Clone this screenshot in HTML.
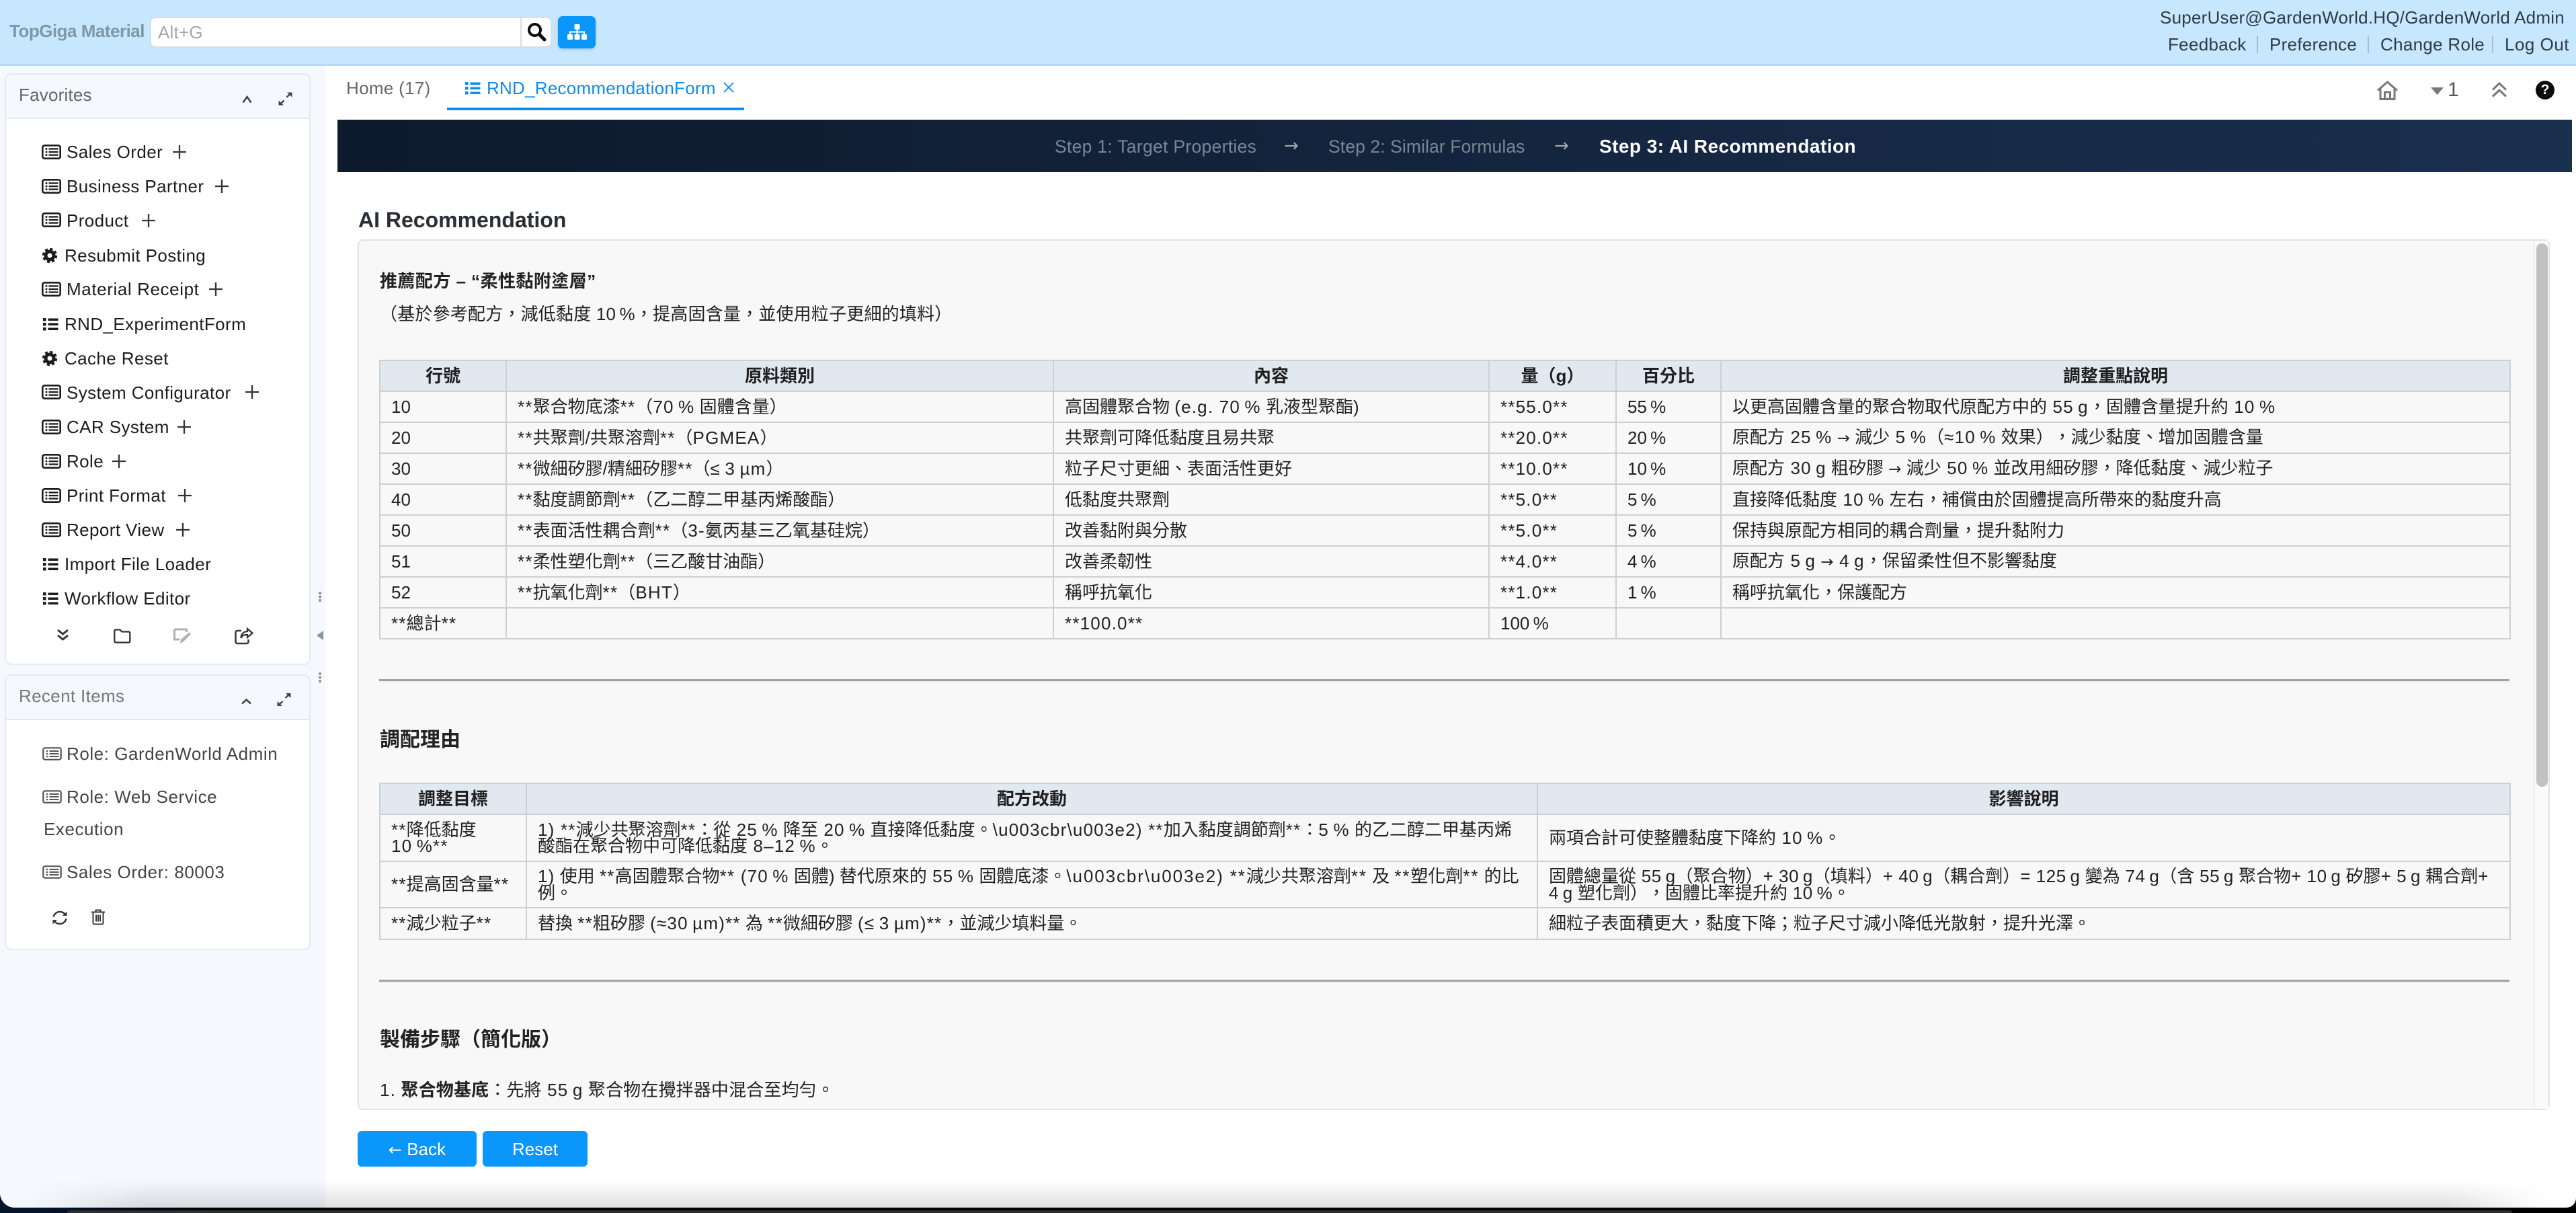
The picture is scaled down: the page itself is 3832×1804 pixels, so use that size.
<!DOCTYPE html>
<html lang="zh-Hant"><head><meta charset="utf-8"><title>RND_RecommendationForm</title>
<style>
*{box-sizing:border-box}
html,body{margin:0;padding:0;width:3832px;height:1804px;overflow:hidden;background:#000}
body{font-family:"Liberation Sans","Noto Sans CJK TC",sans-serif;font-size:26px;color:#222;position:relative;text-spacing-trim:space-all;font-feature-settings:"chws" 0}
.a{position:absolute}
.t{position:absolute;white-space:nowrap;line-height:32px;transform:translateY(-16px)}
svg{position:absolute;overflow:visible}
#page{position:absolute;left:0;top:0;width:3832px;height:1796px;background:#fff;overflow:hidden;border-radius:0 0 14px 22px}
.panel{position:absolute;left:7px;width:455px;background:#fff;border:2px solid #e6eaee;border-radius:10px}
.phead{position:absolute;left:0;top:0;right:0;background:#f5f9fd;border-bottom:2px solid #e4e8ec;border-radius:8px 8px 0 0}
.s{letter-spacing:.4px;color:#1c1c1c}
.r{letter-spacing:.55px;color:#444}
.box{position:absolute;left:532px;top:356px;width:3261px;height:1295px;background:#f8f8f8;border:2px solid #e3e3e3;border-radius:8px;overflow:hidden}
table{position:absolute;left:564px;border-collapse:collapse;table-layout:fixed;font-size:26px;color:#222}
th,td{border:2px solid #cdd0d3;padding:0 16px;line-height:24.5px;white-space:nowrap;vertical-align:middle;text-align:left;overflow:hidden}
th{background:#e2e8f0;text-align:center;font-weight:700;color:#1f1f1f}
i{font-style:normal;letter-spacing:1.2px}
.n i{letter-spacing:.55px}
i.u{letter-spacing:1.9px}
.ar{font-family:"DejaVu Sans",sans-serif;font-size:23px;letter-spacing:0}
hr.h{position:absolute;left:564px;width:3169px;height:3px;margin:0;border:0;background:#a2a2a2;box-shadow:0 2px 0 #eee}
.btn{position:absolute;top:1682px;height:53px;background:#0a96fb;color:#fff;border-radius:6px;text-align:center;line-height:54px;font-size:26px}
</style></head><body>
<div class="a" style="left:0;top:1760px;width:60px;height:44px;background:#04142c"></div>
<div class="a" style="left:60px;top:1796px;width:240px;height:8px;background:linear-gradient(90deg,#04142c,#000)"></div>
<div class="a" style="left:100px;top:1800px;width:3637px;height:4px;background:#2c2e32;border-radius:6px 6px 0 0"></div>
<div id="page">
<!-- header -->
<div class="a" style="left:0;top:0;width:3832px;height:98px;background:#c7e7fe;border-bottom:3px solid #b3dcfb"></div>
<div class="t" style="left:14px;top:46px;font-weight:700;color:#7e98a8;letter-spacing:-.5px">TopGiga Material</div>
<div class="a" style="left:223px;top:25px;width:598px;height:46px;background:#fff;border:2px solid #d8dde0;border-radius:8px"></div>
<div class="a" style="left:774px;top:26px;width:2px;height:44px;background:#dcdcdc"></div>
<div class="t" style="left:235px;top:48px;color:#a6a6a6;letter-spacing:.2px">Alt+G</div>
<svg style="left:784px;top:33px" width="28" height="28" viewBox="0 0 28 28"><circle cx="11.5" cy="11.5" r="8.5" fill="none" stroke="#0b0b0b" stroke-width="4"/><path d="M18 18l8 8" stroke="#0b0b0b" stroke-width="5" stroke-linecap="round"/></svg>
<div class="a" style="left:830px;top:24px;width:56px;height:48px;background:#0a96fb;border-radius:7px;box-shadow:0 2px 4px rgba(0,0,0,.15)"></div>
<svg style="left:844px;top:36px" width="29" height="24" viewBox="0 0 29 24"><g fill="#fff"><rect x="10.500" y="0" width="8" height="8" rx="1.500"/><rect x="0" y="15" width="8" height="8" rx="1.500"/><rect x="10.500" y="15" width="8" height="8" rx="1.500"/><rect x="21" y="15" width="8" height="8" rx="1.500"/></g><path d="M14.500 8v7M4 15v-3.500h21V15" fill="none" stroke="#fff" stroke-width="2"/></svg>
<div class="t" style="left:3213px;top:26px;color:#2f3a45;letter-spacing:.24px">SuperUser@GardenWorld.HQ/GardenWorld Admin</div>
<div class="t" style="left:3225px;top:66px;color:#2f3a45;letter-spacing:.3px">Feedback</div>
<div class="a" style="left:3357px;top:53px;width:2px;height:26px;background:#a9bccb"></div>
<div class="t" style="left:3376px;top:66px;color:#2f3a45;letter-spacing:.3px">Preference</div>
<div class="a" style="left:3522px;top:53px;width:2px;height:26px;background:#a9bccb"></div>
<div class="t" style="left:3541px;top:66px;color:#2f3a45;letter-spacing:.3px">Change Role</div>
<div class="a" style="left:3707px;top:53px;width:2px;height:26px;background:#a9bccb"></div>
<div class="t" style="left:3726px;top:66px;color:#2f3a45;letter-spacing:.5px">Log Out</div>

<!-- sidebar -->
<div class="a" style="left:0;top:98px;width:484px;height:1698px;background:#f5f9fd"></div>
<div class="panel" style="top:109px;height:880px"><div class="phead" style="height:66px"></div></div>
<div class="t" style="left:28px;top:141px;color:#666;letter-spacing:.2px">Favorites</div>
<svg style="left:360px;top:142px" width="15" height="12" viewBox="0 0 15 12"><path d="M1.500 10.500L7.500 2l6 8.500" fill="none" stroke="#444" stroke-width="2.600"/></svg>
<svg style="left:414px;top:137px" width="21" height="20" viewBox="0 0 21 20"><path d="M12.500 7.500L19 1.500M2 18.500l6.500-6" stroke="#444" stroke-width="2.400"/><path d="M13 0.500h7.500v7zM8 19.500H.5v-7z" fill="#444"/></svg>

<svg width="0" height="0" style="position:absolute"><defs>
<g id="la"><rect x="1.300" y="1.300" width="26.400" height="19.400" rx="3" fill="none" stroke="#1c1c1c" stroke-width="2.600"/><g fill="#1c1c1c"><circle cx="7" cy="6.500" r="1.500"/><circle cx="7" cy="11" r="1.500"/><circle cx="7" cy="15.500" r="1.500"/><rect x="10.500" y="5.300" width="14" height="2.300"/><rect x="10.500" y="9.900" width="14" height="2.300"/><rect x="10.500" y="14.400" width="14" height="2.300"/></g></g>
<g id="lr"><rect x="1.300" y="1.300" width="26.400" height="17.400" rx="2.500" fill="none" stroke="#555" stroke-width="2.200"/><g fill="#555"><circle cx="7" cy="6" r="1.300"/><circle cx="7" cy="10" r="1.300"/><circle cx="7" cy="14" r="1.300"/><rect x="10.500" y="5" width="14" height="2"/><rect x="10.500" y="9" width="14" height="2"/><rect x="10.500" y="13" width="14" height="2"/></g></g>
<g id="li" fill="#1c1c1c"><rect x="0" y="0" width="4.500" height="4.500"/><rect x="0" y="7" width="4.500" height="4.500"/><rect x="0" y="14" width="4.500" height="4.500"/><rect x="7.500" y="0.500" width="15" height="3.500"/><rect x="7.500" y="7.500" width="15" height="3.500"/><rect x="7.500" y="14.500" width="15" height="3.500"/></g>
<g id="co"><circle cx="11" cy="11" r="6" fill="none" stroke="#1c1c1c" stroke-width="5"/><circle cx="11" cy="11" r="9.200" fill="none" stroke="#1c1c1c" stroke-width="4" stroke-dasharray="4 3.220"/></g>
<path id="pl" d="M0-10V10M-10 0H10" stroke="#333" stroke-width="2.300" fill="none"/>
</defs></svg>

<svg style="left:62px;top:215px" width="29" height="22"><use href="#la"/></svg><div class="t s" style="left:99px;top:226px">Sales Order</div><svg style="left:267px;top:226px" width="1" height="1"><use href="#pl"/></svg>
<svg style="left:62px;top:266px" width="29" height="22"><use href="#la"/></svg><div class="t s" style="left:99px;top:277px">Business Partner</div><svg style="left:330px;top:277px" width="1" height="1"><use href="#pl"/></svg>
<svg style="left:62px;top:316px" width="29" height="22"><use href="#la"/></svg><div class="t s" style="left:99px;top:328px">Product</div><svg style="left:221px;top:328px" width="1" height="1"><use href="#pl"/></svg>
<svg style="left:63px;top:369px" width="22" height="22"><use href="#co"/></svg><div class="t s" style="left:96px;top:380px">Resubmit Posting</div>
<svg style="left:62px;top:419px" width="29" height="22"><use href="#la"/></svg><div class="t s" style="left:99px;top:430px;letter-spacing:.6px">Material Receipt</div><svg style="left:321px;top:430px" width="1" height="1"><use href="#pl"/></svg>
<svg style="left:64px;top:473px" width="23" height="19"><use href="#li"/></svg><div class="t s" style="left:96px;top:482px">RND_ExperimentForm</div>
<svg style="left:63px;top:522px" width="22" height="22"><use href="#co"/></svg><div class="t s" style="left:96px;top:533px">Cache Reset</div>
<svg style="left:62px;top:572px" width="29" height="22"><use href="#la"/></svg><div class="t s" style="left:99px;top:584px">System Configurator</div><svg style="left:375px;top:583px" width="1" height="1"><use href="#pl"/></svg>
<svg style="left:62px;top:624px" width="29" height="22"><use href="#la"/></svg><div class="t s" style="left:99px;top:635px">CAR System</div><svg style="left:274px;top:635px" width="1" height="1"><use href="#pl"/></svg>
<svg style="left:62px;top:675px" width="29" height="22"><use href="#la"/></svg><div class="t s" style="left:99px;top:686px">Role</div><svg style="left:177px;top:686px" width="1" height="1"><use href="#pl"/></svg>
<svg style="left:62px;top:726px" width="29" height="22"><use href="#la"/></svg><div class="t s" style="left:99px;top:737px">Print Format</div><svg style="left:275px;top:737px" width="1" height="1"><use href="#pl"/></svg>
<svg style="left:62px;top:777px" width="29" height="22"><use href="#la"/></svg><div class="t s" style="left:99px;top:788px">Report View</div><svg style="left:272px;top:788px" width="1" height="1"><use href="#pl"/></svg>
<svg style="left:64px;top:830px" width="23" height="19"><use href="#li"/></svg><div class="t s" style="left:96px;top:839px">Import File Loader</div>
<svg style="left:64px;top:881px" width="23" height="19"><use href="#li"/></svg><div class="t s" style="left:96px;top:890px">Workflow Editor</div>

<svg style="left:84px;top:935px" width="19" height="20" viewBox="0 0 19 20"><path d="M2 2l7.500 6L17 2M2 10l7.500 6L17 10" fill="none" stroke="#333" stroke-width="2.800"/></svg>
<svg style="left:169px;top:935px" width="26" height="22" viewBox="0 0 26 22"><path d="M1.300 3.500a2 2 0 012-2h6l3 3h10a2 2 0 012 2v12a2 2 0 01-2 2H3.300a2 2 0 01-2-2z" fill="none" stroke="#333" stroke-width="2.300"/></svg>
<svg style="left:258px;top:934px" width="27" height="24" viewBox="0 0 27 24"><path d="M1.500 2h18v4M1.500 2v15h8" fill="none" stroke="#b0b0b0" stroke-width="3"/><path d="M24 6l2 3-11 11-5 3 1-6z" fill="#b0b0b0"/></svg>
<svg style="left:349px;top:933px" width="28" height="25" viewBox="0 0 28 25"><path d="M10 5H4a2.500 2.500 0 00-2.500 2.500v14A2.500 2.500 0 004 24h14a2.500 2.500 0 002.500-2.500V18" fill="none" stroke="#333" stroke-width="2.500"/><path d="M19 2l7.500 6.500L19 15v-4c-5 0-8 1-9.500 5 0-6 3.500-9.500 9.500-10z" fill="none" stroke="#333" stroke-width="2.300"/></svg>

<div class="panel" style="top:1003px;height:410px"><div class="phead" style="height:66px"></div></div>
<div class="t" style="left:28px;top:1035px;color:#777;letter-spacing:.35px">Recent Items</div>
<svg style="left:359px;top:1037px" width="15" height="11" viewBox="0 0 15 11"><path d="M1 9.500L7.500 3.500l6.500 6" fill="none" stroke="#444" stroke-width="2.600"/></svg>
<svg style="left:412px;top:1030px" width="21" height="21" viewBox="0 0 21 20"><path d="M12.500 7.500L19 1.500M2 18.500l6.500-6" stroke="#444" stroke-width="2.400"/><path d="M13 0.500h7.500v7zM8 19.500H.5v-7z" fill="#444"/></svg>

<svg style="left:63px;top:1111px" width="29" height="20"><use href="#lr"/></svg><div class="t r" style="left:99px;top:1121px">Role: GardenWorld Admin</div>
<svg style="left:63px;top:1175px" width="29" height="20"><use href="#lr"/></svg><div class="t r" style="left:99px;top:1185px">Role: Web Service</div>
<div class="t r" style="left:65px;top:1233px">Execution</div>
<svg style="left:63px;top:1287px" width="29" height="20"><use href="#lr"/></svg><div class="t r" style="left:99px;top:1297px">Sales Order: 80003</div>
<svg style="left:77px;top:1354px" width="24" height="22" viewBox="0 0 24 22"><path d="M2.500 9.500C4 4.500 8 2 12 2c3.500 0 6 1.500 8 4M21.500 12.500C20 17.500 16 20 12 20c-3.500 0-6-1.500-8-4" fill="none" stroke="#3a3a3a" stroke-width="2.600"/><path d="M22.500 1.500V8H16zM1.500 20.500V14H8z" fill="#3a3a3a"/></svg>
<svg style="left:136px;top:1352px" width="20" height="24" viewBox="0 0 20 24"><path d="M0 4.500h20M6.500 4V1.500h7V4M2.500 5v15.500a2 2 0 002 2h11a2 2 0 002-2V5M7 8.500v10M10 8.500v10M13 8.500v10" fill="none" stroke="#3a3a3a" stroke-width="2"/></svg>

<svg style="left:473px;top:879px" width="6" height="17"><g fill="#8d8d8d"><circle cx="3" cy="3" r="2"/><circle cx="3" cy="8.500" r="2"/><circle cx="3" cy="14" r="2"/></g></svg>
<svg style="left:471px;top:938px" width="10" height="14"><path d="M10 0v14L0 7z" fill="#8d939a"/></svg>
<svg style="left:473px;top:999px" width="6" height="17"><g fill="#8d8d8d"><circle cx="3" cy="3" r="2"/><circle cx="3" cy="8.500" r="2"/><circle cx="3" cy="14" r="2"/></g></svg>

<!-- tabs -->
<div class="t" style="left:515px;top:131px;color:#666;letter-spacing:.3px">Home (17)</div>
<svg style="left:692px;top:122px" width="23" height="19" viewBox="0 0 23 19"><g fill="#0d8bf0"><rect x="0" y="0" width="4.500" height="4.500"/><rect x="0" y="7" width="4.500" height="4.500"/><rect x="0" y="14" width="4.500" height="4.500"/><rect x="7.500" y="0.500" width="15" height="3.500"/><rect x="7.500" y="7.500" width="15" height="3.500"/><rect x="7.500" y="14.500" width="15" height="3.500"/></g></svg>
<div class="t" style="left:724px;top:131px;color:#0d8bf0;letter-spacing:.25px">RND_RecommendationForm</div>
<svg style="left:1076px;top:122px" width="16" height="16" viewBox="0 0 16 16"><path d="M1 1l14 14M15 1L1 15" stroke="#0d8bf0" stroke-width="1.800"/></svg>
<div class="a" style="left:665px;top:160px;width:442px;height:4px;background:#0d8bf0"></div>

<svg style="left:3535px;top:120px" width="33" height="29" viewBox="0 0 33 29"><path d="M2 14.500L16.500 2 31 14.500M6 12v15.500h21V12M12.500 27.500V17h8v10.500" fill="none" stroke="#777" stroke-width="3"/></svg>
<svg style="left:3616px;top:130px" width="19" height="11"><path d="M0 0h19L9.500 11z" fill="#777"/></svg>
<div class="t" style="left:3641px;top:134px;font-size:30px;color:#555">1</div>
<svg style="left:3706px;top:122px" width="24" height="23" viewBox="0 0 24 23"><path d="M2 11.500L12 2l10 9.500M2 21.500L12 12l10 9.500" fill="none" stroke="#777" stroke-width="3"/></svg>
<div class="a" style="left:3772px;top:120px;width:28px;height:28px;border-radius:50%;background:#0c0c0c;color:#fff;font-weight:700;font-size:21px;line-height:28px;text-align:center">?</div>

<!-- wizard banner -->
<div class="a" style="left:502px;top:178px;width:3324px;height:78px;background:linear-gradient(90deg,#0d1a2d,#1a2f4e)"></div>
<div class="t" style="left:1569px;top:218px;color:#7b8695;font-size:26.500px;letter-spacing:.3px">Step 1: Target Properties</div>
<div class="t" style="left:1910px;top:217px;color:#a3aab4;font-size:26px;font-family:'DejaVu Sans',sans-serif">→</div>
<div class="t" style="left:1976px;top:218px;color:#7b8695;font-size:26.500px;letter-spacing:.1px">Step 2: Similar Formulas</div>
<div class="t" style="left:2312px;top:217px;color:#a3aab4;font-size:26px;font-family:'DejaVu Sans',sans-serif">→</div>
<div class="t" style="left:2379px;top:218px;color:#fff;font-weight:700;font-size:28px;letter-spacing:.45px">Step 3: AI Recommendation</div>

<div class="t" style="left:533px;top:327px;font-size:32px;font-weight:700;color:#2a2f36">AI Recommendation</div>

<div class="box"></div>
<div class="a" style="left:3769px;top:358px;width:22px;height:1291px;background:#fafafa;border-left:2px solid #ececec"></div>
<div class="a" style="left:3773px;top:362px;width:17px;height:808px;background:#c1c1c1;border-radius:8px"></div>

<div class="t" style="left:565px;top:418px;font-weight:700;letter-spacing:.45px">推薦配方 – “柔性黏附塗層”</div>
<div class="t" style="left:565px;top:467px;letter-spacing:.2px">（基於參考配方，減低黏度 10&thinsp;%，提高固含量，並使用粒子更細的填料）</div>

<table style="top:535px;width:3169px">
<colgroup><col style="width:188px"><col style="width:814px"><col style="width:648px"><col style="width:189px"><col style="width:156px"><col style="width:1174px"></colgroup>
<tr style="height:46px"><th>行號</th><th>原料類別</th><th>內容</th><th>量（g）</th><th>百分比</th><th>調整重點說明</th></tr>
<tr style="height:46px"><td>10</td><td><i>**</i>聚合物底漆<i>**</i>（<i>70&thinsp;%</i> 固體含量）</td><td>高固體聚合物 <i>(e.g. 70&thinsp;%</i> 乳液型聚酯)</td><td><i>**55.0**</i></td><td>55&thinsp;%</td><td>以更高固體含量的聚合物取代原配方中的<i> 55&thinsp;g</i>，固體含量提升約<i> 10&thinsp;%</i></td></tr>
<tr style="height:46px"><td>20</td><td><i>**</i>共聚劑/共聚溶劑<i>**</i>（<i>PGMEA</i>）</td><td>共聚劑可降低黏度且易共聚</td><td><i>**20.0**</i></td><td>20&thinsp;%</td><td>原配方<i> 25&thinsp;%</i> <span class="ar">→</span> 減少<i> 5&thinsp;%</i>（<i>≈10&thinsp;%</i> 效果），減少黏度、增加固體含量</td></tr>
<tr style="height:46px"><td>30</td><td><i>**</i>微細矽膠/精細矽膠<i>**</i>（<i>≤&thinsp;3&thinsp;µm</i>）</td><td>粒子尺寸更細、表面活性更好</td><td><i>**10.0**</i></td><td>10&thinsp;%</td><td>原配方<i> 30&thinsp;g</i> 粗矽膠 <span class="ar">→</span> 減少<i> 50&thinsp;%</i> 並改用細矽膠，降低黏度、減少粒子</td></tr>
<tr style="height:46px"><td>40</td><td><i>**</i>黏度調節劑<i>**</i>（乙二醇二甲基丙烯酸酯）</td><td>低黏度共聚劑</td><td><i>**5.0**</i></td><td>5&thinsp;%</td><td>直接降低黏度<i> 10&thinsp;%</i> 左右，補償由於固體提高所帶來的黏度升高</td></tr>
<tr style="height:46px"><td>50</td><td><i>**</i>表面活性耦合劑<i>**</i>（<i>3-</i>氨丙基三乙氧基硅烷）</td><td>改善黏附與分散</td><td><i>**5.0**</i></td><td>5&thinsp;%</td><td>保持與原配方相同的耦合劑量，提升黏附力</td></tr>
<tr style="height:46px"><td>51</td><td><i>**</i>柔性塑化劑<i>**</i>（三乙酸甘油酯）</td><td>改善柔韌性</td><td><i>**4.0**</i></td><td>4&thinsp;%</td><td>原配方<i> 5&thinsp;g</i> <span class="ar">→</span><i> 4&thinsp;g</i>，保留柔性但不影響黏度</td></tr>
<tr style="height:46px"><td>52</td><td><i>**</i>抗氧化劑<i>**</i>（<i>BHT</i>）</td><td>稱呼抗氧化</td><td><i>**1.0**</i></td><td>1&thinsp;%</td><td>稱呼抗氧化，保護配方</td></tr>
<tr style="height:46px"><td><i>**</i>總計<i>**</i></td><td></td><td><i>**100.0**</i></td><td>100&thinsp;%</td><td></td><td></td></tr>
</table>

<hr class="h" style="top:1010px">
<div class="t" style="left:565px;top:1101px;font-size:30px;font-weight:700">調配理由</div>

<table style="top:1164px;width:3169px">
<colgroup><col style="width:218px"><col style="width:1504px"><col style="width:1447px"></colgroup>
<tr style="height:46px"><th>調整目標</th><th>配方改動</th><th>影響說明</th></tr>
<tr style="height:70px"><td><i>**</i>降低黏度<br><i>10&thinsp;%**</i></td><td><i>1) **</i>減少共聚溶劑<i>**</i>：從<i> 25&thinsp;%</i> 降至<i> 20&thinsp;%</i> 直接降低黏度。<i>\u003cbr\u003e2) **</i>加入黏度調節劑<i>**</i>：<i>5&thinsp;%</i> 的乙二醇二甲基丙烯<br>酸酯在聚合物中可降低黏度<i> 8–12&thinsp;%</i>。</td><td>兩項合計可使整體黏度下降約<i> 10&thinsp;%</i>。</td></tr>
<tr style="height:69px"><td><i>**</i>提高固含量<i>**</i></td><td><i>1)</i> 使用 <i>**</i>高固體聚合物<i>** (70&thinsp;%</i> 固體) 替代原來的<i> 55&thinsp;%</i> 固體底漆。<i class="u">\u003cbr\u003e2) **</i>減少共聚溶劑<i class="u">**</i> 及 <i class="u">**</i>塑化劑<i class="u">**</i> 的比<br>例。</td><td class="n">固體總量從<i> 55&thinsp;g</i>（聚合物）<i>+ 30&thinsp;g</i>（填料）<i>+ 40&thinsp;g</i>（耦合劑）<i>= 125&thinsp;g</i> 變為<i> 74&thinsp;g</i>（含<i> 55&thinsp;g</i> 聚合物<i>+ 10&thinsp;g</i> 矽膠<i>+ 5&thinsp;g</i> 耦合劑<i>+</i><br><i>4&thinsp;g</i> 塑化劑），固體比率提升約<i> 10&thinsp;%</i>。</td></tr>
<tr style="height:47px"><td><i>**</i>減少粒子<i>**</i></td><td>替換 <i>**</i>粗矽膠 <i>(≈30&thinsp;µm)**</i> 為 <i>**</i>微細矽膠 <i>(≤&thinsp;3&thinsp;µm)**</i>，並減少填料量。</td><td>細粒子表面積更大，黏度下降；粒子尺寸減小降低光散射，提升光澤。</td></tr>
</table>

<hr class="h" style="top:1457px">
<div class="t" style="left:565px;top:1547px;font-size:30px;font-weight:700">製備步驟（簡化版）</div>
<div class="t" style="left:565px;top:1621px;letter-spacing:.15px"><i>1.</i> <b>聚合物基底</b>：先將<i> 55&thinsp;g</i> 聚合物在攪拌器中混合至均勻。</div>

<div class="btn" style="left:532px;width:177px"><span class="ar" style="font-size:24px">←</span> Back</div>
<div class="btn" style="left:718px;width:156px">Reset</div>

<div class="a" style="left:0;top:1756px;width:3832px;height:40px;background:linear-gradient(180deg,rgba(0,0,0,0),rgba(0,0,0,.125));-webkit-mask-image:linear-gradient(90deg,transparent 0,transparent 40px,#000 220px,#000 3640px,transparent 3790px)"></div>
</div>
</body></html>
